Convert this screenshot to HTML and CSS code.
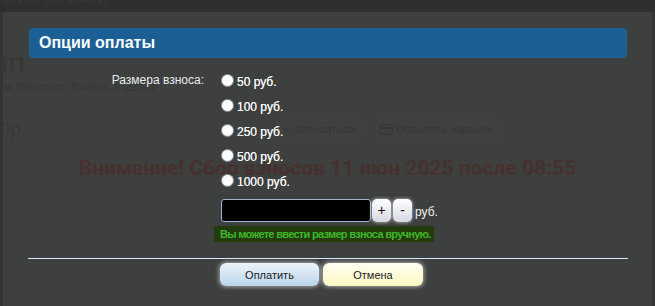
FILE: index.html
```html
<!DOCTYPE html>
<html lang="ru">
<head>
<meta charset="utf-8">
<title>Опции оплаты</title>
<link rel="stylesheet" href="styles.css">
</head>
<body>
<div class="page">
  <div class="topbar"><span>Оплатить (по клику)</span></div>
  <main class="main">
    <div class="clipline title"><span>Sharoun</span></div>
    <div class="clipline sub"><span>Создано пользователем Sharoun, Вчера, в 22:33</span></div>
    <div class="actions">
      <div class="clipline price"><span>500р.</span></div>
      <span class="pbtn join">+ Записаться</span>
      <span class="pbtn prepay"><svg class="card" width="14" height="11" viewBox="0 0 14 11"><rect x="0.75" y="0.75" width="12.5" height="9.5" rx="1.5" fill="none" stroke="currentColor" stroke-width="1.5"/><rect x="1" y="3" width="12" height="2" fill="currentColor"/></svg>Оплатить заранее</span>
    </div>
    <div class="warn">Внимание! Сбор взносов 11 июн 2025 после 08:55</div>
  </main>
</div>

<div class="dialog">
  <div class="dlg-title">Опции оплаты</div>
  <div class="form">
    <div class="flabel">Размера взноса:</div>
    <div class="options">
      <label class="opt"><input type="radio" name="sum"><span>50 руб.</span></label>
      <label class="opt"><input type="radio" name="sum"><span>100 руб.</span></label>
      <label class="opt"><input type="radio" name="sum"><span>250 руб.</span></label>
      <label class="opt"><input type="radio" name="sum"><span>500 руб.</span></label>
      <label class="opt"><input type="radio" name="sum"><span>1000 руб.</span></label>
      <div class="custom">
        <input class="sum-input" type="text">
        <button class="step plus">+</button>
        <button class="step minus">-</button>
        <span class="cur">руб.</span>
      </div>
      <div class="hint">Вы можете ввести размер взноса вручную.</div>
    </div>
  </div>
  <hr class="sep">
  <div class="btns">
    <button class="btn pay">Оплатить</button>
    <button class="btn cancel">Отмена</button>
  </div>
</div>
</body>
</html>
```
FILE: styles.css
```css
html, body {
  margin: 0;
  padding: 0;
}
body {
  width: 655px;
  height: 306px;
  overflow: hidden;
  background: #333434;
  font-family: "Liberation Sans", Arial, sans-serif;
  position: relative;
}
.page {
  height: 306px;
  display: flex;
  flex-direction: column;
}
.topbar {
  height: 12px;
  background: #2e2f2f;
  overflow: hidden;
  color: #393a3a;
  font-size: 14px;
  line-height: 14px;
}
.topbar span {
  display: block;
  margin-top: -9px;
  margin-left: -22px;
}
.main {
  flex: 1;
  margin: 0 3px;
  background: #3e3f3f;
  overflow: hidden;
}
.clipline {
  display: flex;
  justify-content: flex-end;
  white-space: nowrap;
}
.clipline span {
  flex: none;
}
.title {
  width: 22px;
  margin-top: 36px;
  font-size: 30px;
  line-height: 30px;
  color: #363737;
}
.sub {
  width: 152px;
  margin-top: 2px;
  font-size: 12px;
  font-weight: bold;
  line-height: 14px;
  color: #383939;
}
.actions {
  display: flex;
  align-items: center;
  margin-top: 22px;
  height: 26px;
}
.price {
  width: 23px;
  font-size: 19px;
  line-height: 20px;
  color: #373838;
}
.pbtn {
  display: flex;
  align-items: center;
  gap: 3px;
  height: 26px;
  padding: 0 8px;
  border-radius: 4px;
  font-family: Roboto, sans-serif;
  font-size: 11.5px;
  color: #363737;
  background: #3f4040;
  white-space: nowrap;
}
.join {
  margin-left: 249px;
}
.prepay {
  margin-left: 12px;
  padding-left: 4px;
}
.card {
  color: #363737;
}
.warn {
  margin-top: 14px;
  text-align: center;
  font-family: Roboto, sans-serif;
  font-weight: bold;
  font-size: 21px;
  line-height: 24px;
  color: #463030;
  white-space: nowrap;
}

/* dialog */
.dialog {
  position: absolute;
  left: 3px;
  top: 12px;
  right: 3px;
  bottom: 0;
  padding: 16px 24px 0 25px;
  display: flex;
  flex-direction: column;
}
.dlg-title {
  margin: 0 1px;
  height: 30px;
  line-height: 30px;
  padding-left: 10px;
  background: #1b5f95;
  border-radius: 4px;
  color: #ffffff;
  font-weight: bold;
  font-size: 16px;
}
.form {
  margin-top: 10px;
  display: grid;
  grid-template-columns: 176px 1fr;
  column-gap: 17px;
}
.flabel {
  text-align: right;
  font-size: 12px;
  line-height: 25px;
  color: #ececec;
}
.options {
  display: flex;
  flex-direction: column;
  align-items: flex-start;
}
.opt {
  height: 25px;
  display: flex;
  align-items: center;
  font-size: 12px;
  color: #f4f4f4;
  text-shadow: 0 0 0.5px #ffffff;
}
.opt input {
  appearance: none;
  -webkit-appearance: none;
  width: 13px;
  height: 13px;
  margin: 0 3px 0 0;
  border-radius: 50%;
  background: radial-gradient(circle at 50% 40%, #ffffff 55%, #dcdcdc 100%);
  border: 1px solid #9a9a9a;
  box-sizing: border-box;
}
.opt span {
  padding-top: 3px;
}
.custom {
  margin-top: 6px;
  display: flex;
  align-items: center;
  height: 23px;
}
.sum-input {
  width: 150px;
  height: 23px;
  box-sizing: border-box;
  margin: 0;
  border: 1px solid #9fb8cf;
  border-radius: 3px;
  background: #000000;
  color: #ffffff;
  padding: 0 4px;
}
.step {
  width: 19px;
  height: 23px;
  margin: 0 0 0 1px;
  padding: 0;
  border: none;
  border-radius: 5px;
  background: linear-gradient(#ffffff, #d6d8e2);
  box-shadow: 0 0 3px 1px rgba(255, 255, 255, 0.45);
  font-family: "Liberation Sans", Arial, sans-serif;
  font-size: 14px;
  color: #111111;
  line-height: 23px;
}
.minus {
  margin-left: 2px;
}
.cur {
  margin-left: 3px;
  font-size: 12px;
  color: #f0f0f0;
  padding-top: 3px;
}
.hint {
  margin-top: 4px;
  margin-left: -7px;
  height: 16px;
  line-height: 16px;
  padding: 0 3px 0 6px;
  background: #243b0c;
  color: #3db82b;
  font-size: 11px;
  font-weight: bold;
  letter-spacing: -0.7px;
  white-space: nowrap;
}
.sep {
  margin: 16px 0 0;
  border: none;
  height: 1px;
  background: #d3e8f8;
}
.btns {
  margin-top: 4px;
  padding-left: 192px;
  display: flex;
  gap: 4px;
}
.btn {
  height: 23px;
  padding: 0;
  border: none;
  border-radius: 6px;
  font-family: "Liberation Sans", Arial, sans-serif;
  font-size: 11px;
  color: #1a1a1a;
  box-shadow: 0 0 4px 1px rgba(255, 255, 255, 0.55);
}
.pay {
  width: 99px;
  background: linear-gradient(#eef4fa, #b9d4eb);
}
.cancel {
  width: 100px;
  background: linear-gradient(#fffef0, #fff8c4);
}
```
